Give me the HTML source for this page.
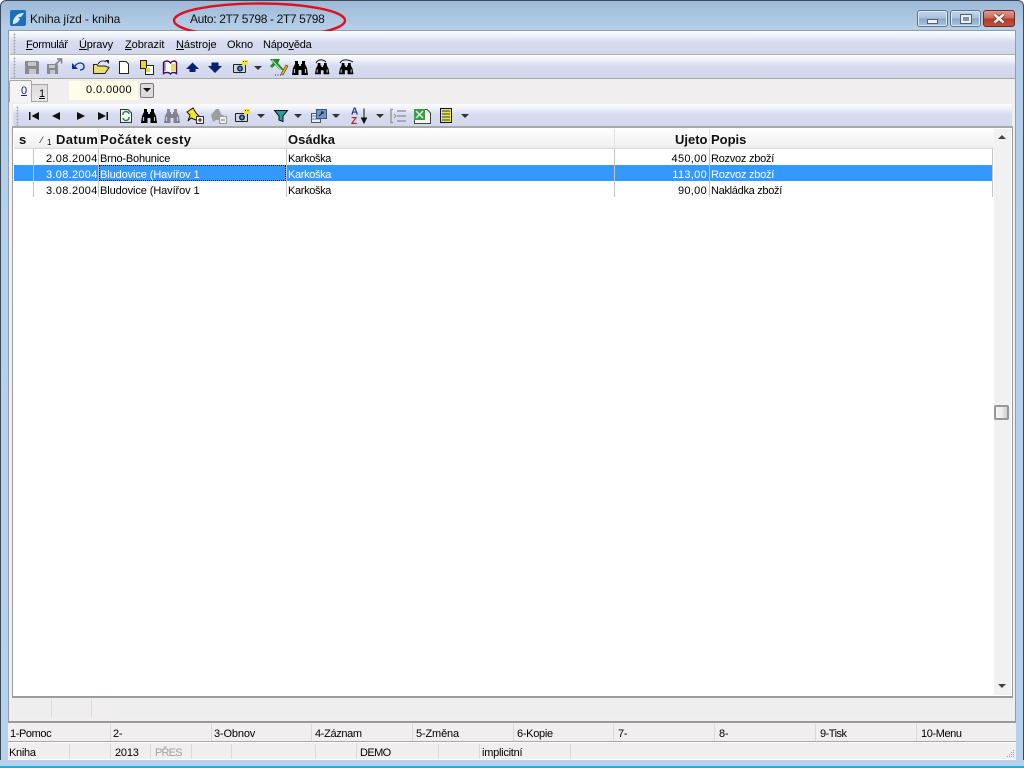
<!DOCTYPE html>
<html><head><meta charset="utf-8"><style>
html,body{margin:0;padding:0;width:1024px;height:768px;overflow:hidden;background:#fff}
*{box-sizing:border-box}
body{font:11px "Liberation Sans","DejaVu Sans",sans-serif;color:#000;position:relative}
.a{position:absolute}
.t{position:absolute;white-space:nowrap;line-height:14px;letter-spacing:-.2px}
.m{letter-spacing:-.05px}
.d{letter-spacing:.3px}
.h{position:absolute;white-space:nowrap;font-weight:bold;font-size:13px;line-height:16px;top:132px;color:#111}
.bar{position:absolute;background:linear-gradient(#fdfdfe 0,#eff1fa 22%,#d8dcef 45%,#d2d8ec 100%)}
.v{position:absolute;width:1px;background:#c4c4c4}
.s{background:#dadada}
.ic{position:absolute;overflow:visible}
.grip{position:absolute;width:3px;background-image:radial-gradient(circle,#a9a9a9 0.9px,transparent 1px);background-size:3px 3px}
u{text-decoration:underline}
</style></head><body>
<div class="a" style="left:0;top:0;width:1024px;height:768px;background:linear-gradient(#9db9d6 0,#b6cfe8 28px,#b9d1ea 100%);border:1px solid #3a4a5a;border-radius:6px 6px 0 0;border-bottom:2px solid #17b5d8"></div>
<div class="a" style="left:8px;top:30px;width:1008px;height:730px;background:#f0eeee;border:1px solid #8f9db0"></div>
<svg class="ic" style="left:10px;top:10px" width="17" height="17"><rect width="16" height="16" rx="2" fill="#1d6fb8"/><path d="M3 11C5 5 9 3 14 3L11 7 8 7 10 9C8 13 5 14 3 14Z" fill="#d6ecfb"/></svg>
<div class="t" style="left:30px;top:12px;font-size:12px;color:#111;letter-spacing:-.1px">Kniha jízd - kniha</div>
<div class="t" style="left:190px;top:12px;font-size:12px;color:#111;letter-spacing:-.36px">Auto: 2T7 5798 - 2T7 5798</div>
<svg class="ic" style="left:170px;top:0" width="180" height="40"><ellipse cx="89.500" cy="20.500" rx="85.500" ry="17" fill="none" stroke="#e01020" stroke-width="2.400"/></svg>
<div class="a" style="left:917px;top:10px;width:31px;height:17px;border:1px solid #5f7488;border-radius:3px;background:linear-gradient(#c4d7ea 0,#a7c0da 48%,#8aa7c6 52%,#a8c4de 100%);box-shadow:inset 0 0 0 1px #dbe7f2"></div>
<div class="a" style="left:927px;top:19px;width:11px;height:5px;background:#eef2f6;border:1px solid #54606e"></div>
<div class="a" style="left:950px;top:10px;width:31px;height:17px;border:1px solid #5f7488;border-radius:3px;background:linear-gradient(#c4d7ea 0,#a7c0da 48%,#8aa7c6 52%,#a8c4de 100%);box-shadow:inset 0 0 0 1px #dbe7f2"></div>
<div class="a" style="left:961px;top:15px;width:10px;height:8px;background:#7d95ae;border:2px solid #e8eef4;outline:1px solid #54606e"></div>
<div class="a" style="left:983px;top:10px;width:32px;height:17px;border:1px solid #6a2a22;border-radius:3px;background:linear-gradient(#dc9a8c 0,#c96a58 48%,#b23a26 52%,#c4503a 100%)"></div>
<svg class="ic" style="left:993px;top:13px" width="14" height="11"><path d="M1.500 1.500L10.500 9.500M10.500 1.500L1.500 9.500" stroke="#50302c" stroke-width="4"/><path d="M1.500 1.500L10.500 9.500M10.500 1.500L1.500 9.500" stroke="#f3eeee" stroke-width="2.600"/></svg>

<div class="bar" style="left:10px;top:31px;width:1005px;height:23px"></div>
<div class="a" style="left:10px;top:54px;width:1005px;height:1px;background:#b0b0b0"></div>
<div class="bar" style="left:10px;top:55px;width:1005px;height:23px"></div>
<div class="a" style="left:10px;top:78px;width:1005px;height:1px;background:#a8a8a8"></div>
<div class="grip" style="left:13px;top:33px;height:21px"></div>
<div class="grip" style="left:13px;top:57px;height:21px"></div>
<div class="t m" style="left:26px;top:38px;letter-spacing:-.3px"><u>F</u>ormulář</div>
<div class="t m" style="left:79px;top:38px;letter-spacing:-.15px"><u>Ú</u>pravy</div>
<div class="t m" style="left:125px;top:38px"><u>Z</u>obrazit</div>
<div class="t m" style="left:176px;top:38px"><u>N</u>ástroje</div>
<div class="t m" style="left:227px;top:38px">Okno</div>
<div class="t m" style="left:263px;top:38px;letter-spacing:-.2px">Nápo<u>v</u>ěda</div>

<svg class="a" style="left:0;top:0" width="1024" height="130">
<defs>
<g id="bino"><path d="M3 0H6V3H7V5H9V3H10V0H13V3L15 7 16 14H9.500V9H6.500V14H0L1 7 3 3Z"/><path d="M2.500 8V12M13.500 8V12" stroke="#fff" stroke-opacity=".75" stroke-width="1.200"/></g>
<g id="cam"><rect x="0" y="4" width="13" height="9" rx="1" fill="#222"/><rect x="1" y="5" width="11" height="7" fill="#d0d4da"/><circle cx="7" cy="8.500" r="3" fill="#1c2c44"/><circle cx="7" cy="8.500" r="1.400" fill="#4fa0e0"/><rect x="9" y="0" width="6" height="5" fill="#f2e33a"/><rect x="10" y="1" width="1" height="1" fill="#333"/><rect x="12.500" y="1" width="1" height="1" fill="#333"/></g>
<path id="dd" d="M0 0H8L4 4Z" fill="#333"/>
</defs>
<!-- toolbar 1 -->
<path d="M25 61H38L39 62V74H25Z" fill="#8a8a8a"/><rect x="28" y="62" width="8" height="4" fill="#c4c6cc"/><rect x="29" y="69" width="7" height="5" fill="#c4c6cc"/>
<path d="M47 64H57L58 65V74H47Z" fill="#8a8a8a"/><rect x="49" y="65" width="6" height="3" fill="#c4c6cc"/><rect x="50" y="70" width="5" height="4" fill="#c4c6cc"/>
<path d="M55 65L61 59M57 59H61.500V63.500" stroke="#8a8a8a" stroke-width="1.800" fill="none"/>
<path d="M75 66C78 62 83 62 84 66 84.500 69 82 70 80 70" fill="none" stroke="#0a2ea8" stroke-width="1.300"/><path d="M72 63V69H78Z" fill="#0a2ea8"/>
<path d="M93.500 73.500V64.500H97L98 66H105L109 67.500 105 73.500Z" fill="#e9dd72" stroke="#222"/>
<path d="M98 64C100 61 103 60 106 62" stroke="#222" fill="none"/><path d="M105 60H109V64Z" fill="#222"/>
<path d="M119.500 61.500H126L128.500 64V73.500H119.500Z" fill="#fff" stroke="#222"/>
<path d="M140.500 60.500H146.500V68.500H140.500ZM145.500 65.500H153.500V74.500H145.500Z" fill="#fff" stroke="#222"/><path d="M141 61H146V68H141ZM146 68H150V72H146Z" fill="#e8d62e"/>
<path d="M163.500 62.500C166 60 169 61 170.500 63 172 61 175 60 176.500 62.500V73.500C174 72 172 72 170.500 74 169 72 166 72 163.500 73.500Z" fill="#fff" stroke="#40104a" stroke-width="1.400"/><path d="M171 63.500H175V71H171Z" fill="#e9df5e"/><path d="M165 63V71" stroke="#a03ca0"/>
<path d="M186 69L192.500 62.500 199 69H195.500V72H189.500V69Z" fill="#0a1f6e"/>
<path d="M211.500 62.500H218.500V66H222L215 73 208 66H211.500Z" fill="#0a1f6e"/>
<use href="#cam" x="233" y="60"/>
<use href="#dd" x="254" y="66"/>
<path d="M270 59L280 59 278 63 284 70 280 70 275 65 272 68 270 66 273 63Z" fill="#1e8a28"/><path d="M272 60L281 70" stroke="#bfe8bf"/><path d="M281 74L286 65 288 66 283 75Z" fill="#e2b52a" stroke="#5a2a10" stroke-width=".6"/><path d="M275 75H276M277.500 75H278.500M280 75H281" stroke="#222"/>
<use href="#bino" x="292" y="61"/>
<g transform="translate(315,63) scale(.9,.8)"><use href="#bino"/></g><path d="M316 63C318 59 323 59 326 62" fill="none" stroke="#111"/>
<g transform="translate(339,63) scale(.9,.8)"><use href="#bino"/></g><path d="M340 63C342 59 347 59 353 62" fill="none" stroke="#111"/>
</svg>

<!-- tabs -->
<div class="a" style="left:9px;top:79px;width:1006px;height:24px;background:#f0eeee"></div>
<div class="a" style="left:9px;top:80px;width:23px;height:22px;background:#f5f4f4;border:1px solid #a6a6a6;border-bottom:0;border-radius:2px 2px 0 0"></div>
<div class="a" style="left:32px;top:84px;width:16px;height:18px;background:linear-gradient(#dcdcdc,#e9e9e9);border:1px solid #a6a6a6;border-left:0"></div>
<div class="t" style="left:21px;top:84px;color:#0a246a"><u>0</u></div>
<div class="t" style="left:39px;top:87px"><u>1</u></div>
<div class="a" style="left:69px;top:81px;width:69px;height:19px;background:#fdfde8"></div>
<div class="t" style="left:86px;top:83px;letter-spacing:.4px">0.0.0000</div>
<div class="a" style="left:140px;top:83px;width:14px;height:15px;background:#dcdcdc;border:1px solid #777;border-radius:2px"></div>
<svg class="ic" style="left:143px;top:88px" width="8" height="5"><path d="M0 0H8L4 4Z" fill="#111"/></svg>

<div class="bar" style="left:13px;top:104px;width:999px;height:22px"></div>
<div class="grip" style="left:16px;top:106px;height:20px"></div>
<div class="a" style="left:12px;top:126px;width:1001px;height:1px;background:#aaa"></div>

<svg class="a" style="left:0;top:100px" width="1024" height="30">
<g transform="translate(0,-100)">
<path d="M29 112V120H30.500V112ZM39 112V120L31.500 116Z" fill="#111"/>
<path d="M60 112V120L52 116Z" fill="#111"/>
<path d="M77 112V120L85 116Z" fill="#111"/>
<path d="M98 112V120L106 116ZM106.500 112V120H108V112Z" fill="#111"/>
<path d="M120.500 109.500H128L131.500 113V122.500H120.500Z" fill="#f3f3e8" stroke="#333"/><path d="M123 115A3 3 0 0 1 129 114M129 117A3 3 0 0 1 123 118" stroke="#2b7d6e" stroke-width="1.500" fill="none"/>
<use href="#bino" x="141" y="109"/>
<use href="#bino" x="164" y="109" opacity=".4"/>
<path d="M187 112L193 108 196 113 200 117 196 120 191 118 188 121 190 115Z" fill="#f4e52a" stroke="#111" stroke-width="1"/>
<rect x="196.500" y="116.500" width="7" height="7" fill="#fff" stroke="#333"/><path d="M198 120H202M200 118V122" stroke="#111"/>
<path d="M211 115L216 109 219 109 221 114 224 116 222 120 216 120 213 122Z" fill="#9aa0a0"/>
<rect x="219.500" y="116.500" width="7" height="7" fill="#eee" stroke="#999"/><path d="M221 120H225" stroke="#777"/>
<use href="#cam" x="235" y="109"/>
<use href="#dd" x="257" y="114"/>
<path d="M274.500 110.500H287.500L283 116V121.500L279 120V116Z" fill="#2d9b9b" stroke="#111"/>
<use href="#dd" x="294" y="114"/>
<rect x="311.500" y="113.500" width="9" height="9" fill="#eef" stroke="#555"/><path d="M312 116H320M312 119H320" stroke="#4a7cc0"/><rect x="316.500" y="109.500" width="10" height="9" fill="#6e96c8" stroke="#40557a"/><path d="M319 116L323 112M321 112H323V114" stroke="#122" fill="none"/>
<use href="#dd" x="332" y="114"/>
<text x="351" y="114.500" font-family="Liberation Sans,sans-serif" font-size="10" font-weight="bold" fill="#2233a0">A</text>
<text x="351" y="124" font-family="Liberation Sans,sans-serif" font-size="10" font-weight="bold" fill="#a02828">Z</text>
<path d="M364 108.500V121M361.500 118L364 123 366.500 118Z" stroke="#111" fill="#111"/>
<use href="#dd" x="376" y="114"/>
<path d="M393 109.500H391V122.500H393M397 111H406M397 116H406M397 121H406" stroke="#999" fill="none" stroke-width="1.500"/><path d="M394 114L396 116 394 118" stroke="#999" fill="none"/>
<path d="M414.500 109.500H427L430.500 113V123.500H414.500Z" fill="#f5f5f0" stroke="#444"/><rect x="414" y="109" width="11" height="11" fill="#3d9a48"/><path d="M416 111L423 118M423 111L416 118" stroke="#d8f0d8" stroke-width="1.500"/>
<rect x="440.500" y="108.500" width="11" height="14" fill="#f7ee2a" stroke="#0a0a50"/><path d="M442 111H450M442 114H450M442 117H450M442 120H450" stroke="#1030a0"/>
<use href="#dd" x="461" y="114"/>
</g></svg>

<!-- grid -->
<div class="a" style="left:12px;top:127px;width:1001px;height:571px;background:#fff;border:1px solid #9c9c9c;border-top:1px solid #a8a8a8;border-bottom:2px solid #9c9c9c"></div>
<div class="a" style="left:14px;top:129px;width:980px;height:20px;background:linear-gradient(#fff 0,#fafafa 20%,#f1f1f1 85%,#e4e4e4 100%)"></div>
<div class="a" style="left:14px;top:148px;width:980px;height:1px;background:#dcdcdc"></div>
<div class="a" style="left:98px;top:129px;width:1px;height:19px;background:#e2e2e2"></div>
<div class="a" style="left:286px;top:129px;width:1px;height:19px;background:#e2e2e2"></div>
<div class="a" style="left:614px;top:129px;width:1px;height:19px;background:#e2e2e2"></div>
<div class="a" style="left:709px;top:129px;width:1px;height:19px;background:#e2e2e2"></div>
<div class="h" style="left:19px">s</div>
<div class="t" style="left:41px;top:133px;font-size:9px">⁄</div>
<div class="t" style="left:47px;top:136px;font-size:8px">1</div>
<div class="h" style="left:56px;letter-spacing:.35px">Datum</div>
<div class="h" style="left:100px;letter-spacing:.35px">Počátek cesty</div>
<div class="h" style="left:288px">Osádka</div>
<div class="h" style="left:675px">Ujeto</div>
<div class="h" style="left:711px">Popis</div>

<div class="a" style="left:14px;top:165px;width:978px;height:16px;background:#3399ff"></div>
<div class="v" style="left:33px;top:149px;height:48px"></div>
<div class="v" style="left:98px;top:149px;height:48px"></div>
<div class="v" style="left:286px;top:149px;height:48px"></div>
<div class="v" style="left:614px;top:149px;height:48px"></div>
<div class="v" style="left:709px;top:149px;height:48px"></div>
<div class="v" style="left:992px;top:149px;height:48px"></div>
<div class="a" style="left:99px;top:165px;width:187px;height:16px;border:1px dotted #1a1000;background:#3399ff"></div>

<div class="t d" style="left:46px;top:152px">2.08.2004</div>
<div class="t" style="left:100px;top:152px">Brno-Bohunice</div>
<div class="t" style="left:288px;top:152px;letter-spacing:-.35px">Karkoška</div>
<div class="t d" style="left:607px;top:152px;width:100px;text-align:right">450,00</div>
<div class="t" style="left:711px;top:152px;letter-spacing:-.25px">Rozvoz zboží</div>

<div class="t d" style="left:46px;top:168px;color:#fff">3.08.2004</div>
<div class="t" style="left:100px;top:168px;color:#fff;letter-spacing:-.1px">Bludovice (Havířov 1</div>
<div class="t" style="left:288px;top:168px;color:#fff;letter-spacing:-.35px">Karkoška</div>
<div class="t d" style="left:607px;top:168px;width:100px;text-align:right;color:#fff">113,00</div>
<div class="t" style="left:711px;top:168px;color:#fff;letter-spacing:-.25px">Rozvoz zboží</div>

<div class="t d" style="left:46px;top:184px">3.08.2004</div>
<div class="t" style="left:100px;top:184px;letter-spacing:-.1px">Bludovice (Havířov 1</div>
<div class="t" style="left:288px;top:184px;letter-spacing:-.35px">Karkoška</div>
<div class="t d" style="left:607px;top:184px;width:100px;text-align:right">90,00</div>
<div class="t" style="left:711px;top:184px;letter-spacing:-.3px">Nakládka zboží</div>

<!-- scrollbar -->
<div class="a" style="left:994px;top:129px;width:17px;height:566px;background:#f1f1f1"></div>
<svg class="ic" style="left:998px;top:134px" width="9" height="6"><path d="M0 5H8L4 1Z" fill="#444"/></svg>
<svg class="ic" style="left:998px;top:684px" width="9" height="6"><path d="M0 0H8L4 4Z" fill="#444"/></svg>
<div class="a" style="left:994px;top:405px;width:15px;height:15px;border:2px solid #979797;border-radius:2px;background:linear-gradient(90deg,#f4f4f4,#eeeeee 50%,#cfcfcf)"></div>

<!-- status strip -->
<div class="a" style="left:12px;top:699px;width:1001px;height:18px;background:#eeeeee"></div>
<div class="a" style="left:51px;top:699px;width:1px;height:18px;background:#dcdcdc"></div>
<div class="a" style="left:91px;top:699px;width:1px;height:18px;background:#dcdcdc"></div>
<div class="a" style="left:92px;top:699px;width:21px;height:18px;background:#f0eeee"></div>
<div class="a" style="left:8px;top:721px;width:1008px;height:2px;background:#999"></div>
<div class="a" style="left:8px;top:723px;width:1008px;height:18px;background:#f0eeee"></div>
<div class="a" style="left:8px;top:741px;width:1008px;height:2px;background:linear-gradient(#a8a8a8 50%,#fff 50%)"></div>
<div class="a" style="left:8px;top:743px;width:1008px;height:16px;background:#f0eeee"></div>
<div class="a" style="left:8px;top:759px;width:1008px;height:1px;background:#fff"></div>
<div class="a" style="left:0;top:760px;width:1024px;height:6px;background:#b9d1ea"></div>
<div class="a" style="left:0;top:766px;width:1024px;height:2px;background:#17b5d8"></div>

<div class="v s" style="left:110px;top:724px;height:17px"></div>
<div class="v s" style="left:211px;top:724px;height:17px"></div>
<div class="v s" style="left:311px;top:724px;height:17px"></div>
<div class="v s" style="left:412px;top:724px;height:17px"></div>
<div class="v s" style="left:513px;top:724px;height:17px"></div>
<div class="v s" style="left:613px;top:724px;height:17px"></div>
<div class="v s" style="left:714px;top:724px;height:17px"></div>
<div class="v s" style="left:815px;top:724px;height:17px"></div>
<div class="v s" style="left:916px;top:724px;height:17px"></div>
<div class="t" style="left:10px;top:727px;letter-spacing:-.4px">1-Pomoc</div>
<div class="t" style="left:113px;top:727px">2-</div>
<div class="t" style="left:214px;top:727px;letter-spacing:-.15px">3-Obnov</div>
<div class="t" style="left:315px;top:727px;letter-spacing:-.35px">4-Záznam</div>
<div class="t" style="left:416px;top:727px;letter-spacing:-.15px">5-Změna</div>
<div class="t" style="left:517px;top:727px;letter-spacing:-.3px">6-Kopie</div>
<div class="t" style="left:618px;top:727px">7-</div>
<div class="t" style="left:719px;top:727px">8-</div>
<div class="t" style="left:820px;top:727px;letter-spacing:-.5px">9-Tisk</div>
<div class="t" style="left:921px;top:727px;letter-spacing:-.4px">10-Menu</div>

<div class="v s" style="left:69px;top:744px;height:15px"></div>
<div class="v s" style="left:110px;top:744px;height:15px"></div>
<div class="v s" style="left:150px;top:744px;height:15px"></div>
<div class="v s" style="left:191px;top:744px;height:15px"></div>
<div class="v s" style="left:231px;top:744px;height:15px"></div>
<div class="v s" style="left:315px;top:744px;height:15px"></div>
<div class="v s" style="left:356px;top:744px;height:15px"></div>
<div class="v s" style="left:438px;top:744px;height:15px"></div>
<div class="v s" style="left:479px;top:744px;height:15px"></div>
<div class="v s" style="left:570px;top:744px;height:15px"></div>
<div class="t" style="left:9px;top:746px;letter-spacing:-.3px">Kniha</div>
<div class="t" style="left:115px;top:746px">2013</div>
<div class="t" style="left:155px;top:746px;color:#a0a0a0;letter-spacing:-.8px">PŘES</div>
<div class="t" style="left:360px;top:746px;letter-spacing:-.6px">DEMO</div>
<div class="t" style="left:482px;top:746px;letter-spacing:-.25px">implicitní</div>
<svg class="ic" style="left:1006px;top:749px" width="9" height="9"><path d="M7 1h1v1H7zM5 3h1v1H5zM7 3h1v1H7zM3 5h1v1H3zM5 5h1v1H5zM7 5h1v1H7zM1 7h1v1H1zM3 7h1v1H3zM5 7h1v1H5zM7 7h1v1H7z" fill="#a0a0a0"/></svg>
</body></html>
